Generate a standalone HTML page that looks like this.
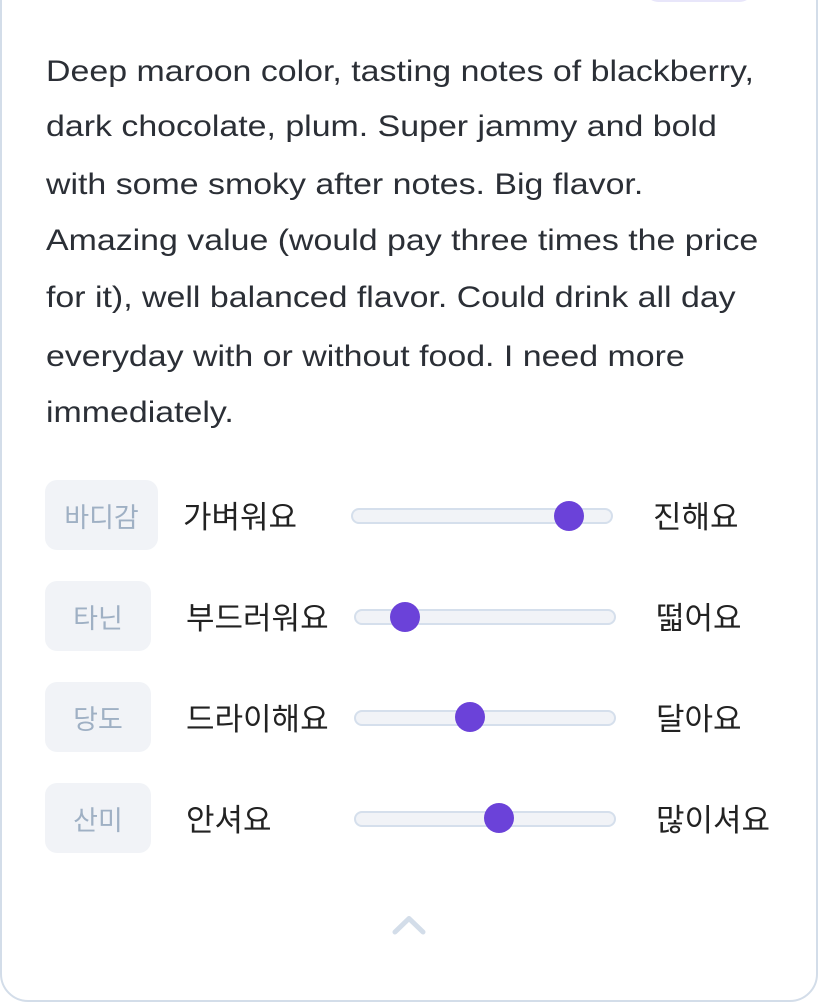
<!DOCTYPE html>
<html><head><meta charset="utf-8">
<style>
html,body{margin:0;padding:0;background:#fff;width:819px;height:1003px;overflow:hidden;position:relative;font-family:"Liberation Sans","Noto Sans CJK KR",sans-serif;}
.card{position:absolute;left:0px;top:-40px;width:818px;height:1042px;border:2px solid #d3dde9;border-radius:28px;box-sizing:border-box;}
.pill{position:absolute;left:643px;top:-30px;width:112px;height:32px;border-radius:16px;background:#fff;border:2px solid #e8e6fa;box-sizing:border-box;}
.ln{position:absolute;left:46px;font-size:30px;color:#2b2f36;white-space:nowrap;line-height:34px;transform:scaleX(1.13);transform-origin:0 0;}
.badge{position:absolute;left:45px;height:70px;border-radius:12px;background:#f1f3f7;color:#9fb0c4;font-size:27px;display:flex;align-items:center;justify-content:center;}
.lab{position:absolute;font-size:31px;color:#222;white-space:nowrap;line-height:36px;}
.track{position:absolute;height:12px;border:2px solid #d5dfec;background:#f1f3f7;border-radius:8px;}
.thumb{position:absolute;width:30px;height:30px;border-radius:50%;background:#6b42d9;}
</style></head><body>
<div class="card"></div>
<div class="pill"></div>
<div class="ln" style="top:55px">Deep maroon color, tasting notes of blackberry,</div>
<div class="ln" style="top:110px">dark chocolate, plum. Super jammy and bold</div>
<div class="ln" style="top:168px">with some smoky after notes. Big flavor.</div>
<div class="ln" style="top:224px">Amazing value (would pay three times the price</div>
<div class="ln" style="top:281px">for it), well balanced flavor. Could drink all day</div>
<div class="ln" style="top:340px">everyday with or without food. I need more</div>
<div class="ln" style="top:396px">immediately.</div>

<div class="badge" style="top:480px;width:113px">바디감</div>
<div class="lab" style="left:183px;top:500px">가벼워요</div>
<div class="track" style="left:351px;top:508px;width:258px"></div>
<div class="thumb" style="left:554px;top:501px"></div>
<div class="lab" style="left:653px;top:500px">진해요</div>

<div class="badge" style="top:581px;width:106px">타닌</div>
<div class="lab" style="left:186px;top:601px">부드러워요</div>
<div class="track" style="left:354px;top:609px;width:258px"></div>
<div class="thumb" style="left:390px;top:602px"></div>
<div class="lab" style="left:656px;top:601px">떫어요</div>

<div class="badge" style="top:682px;width:106px">당도</div>
<div class="lab" style="left:186px;top:702px">드라이해요</div>
<div class="track" style="left:354px;top:710px;width:258px"></div>
<div class="thumb" style="left:455px;top:702px"></div>
<div class="lab" style="left:656px;top:702px">달아요</div>

<div class="badge" style="top:783px;width:106px">산미</div>
<div class="lab" style="left:186px;top:803px">안셔요</div>
<div class="track" style="left:354px;top:811px;width:258px"></div>
<div class="thumb" style="left:484px;top:803px"></div>
<div class="lab" style="left:656px;top:803px">많이셔요</div>

<svg style="position:absolute;left:390px;top:915px" width="40" height="30" viewBox="0 0 40 30">
<path d="M5 17 L19 3.5 L33 17" fill="none" stroke="#d3dde9" stroke-width="5" stroke-linecap="round" stroke-linejoin="round"/>
</svg>
</body></html>
